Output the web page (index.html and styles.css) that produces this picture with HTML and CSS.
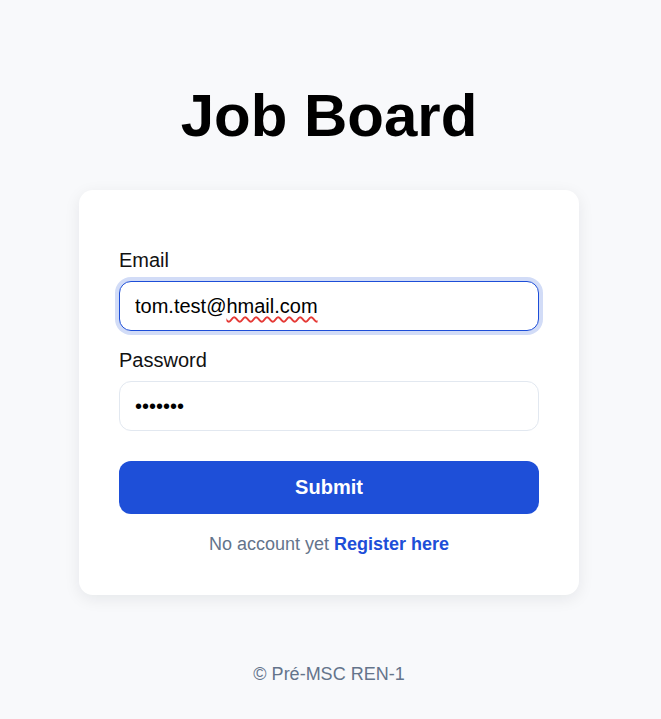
FILE: index.html
```html
<!DOCTYPE html>
<html lang="en">
<head>
<meta charset="utf-8">
<title>Job Board</title>
<link rel="stylesheet" href="styles.css">
</head>
<body>
<main class="page">
  <h1 class="title">Job Board</h1>
  <form class="card">
    <div class="field">
      <label class="label" for="email">Email</label>
      <div class="input-wrap">
        <input class="input is-focused" id="email" type="email" value="tom.test@hmail.com">
        <span class="spell" aria-hidden="true">tom.test@<span class="squiggle">hmail.com</span></span>
      </div>
    </div>
    <div class="field field-second">
      <label class="label" for="password">Password</label>
      <input class="input" id="password" type="password" value="1234567">
    </div>
    <button class="submit" type="button">Submit</button>
    <p class="hint">No account yet <a class="link" href="#">Register here</a></p>
  </form>
  <footer class="footer">© Pré-MSC REN-1</footer>
</main>
</body>
</html>
```

FILE: styles.css
```css
* { box-sizing: border-box; }

html, body {
  margin: 0;
  padding: 0;
}

body {
  background: #f8f9fb;
  font-family: "Liberation Sans", Arial, sans-serif;
  color: #000;
}

.page {
  display: flex;
  flex-direction: column;
  align-items: center;
  padding-top: 81px;
  padding-right: 3px;
}

.title {
  margin: 0 0 40px;
  font-size: 60px;
  font-weight: 700;
  line-height: 69px;
  color: #000;
}

.card {
  width: 500px;
  background: #fff;
  border-radius: 14px;
  box-shadow: 0 4px 16px rgba(15, 23, 42, 0.08);
  padding: 59px 40px 40px;
  display: flex;
  flex-direction: column;
}

.field {
  display: flex;
  flex-direction: column;
  gap: 9px;
}

.field-second {
  margin-top: 18px;
}

.label {
  font-size: 20px;
  line-height: 23px;
  color: #111;
}

.input-wrap {
  position: relative;
}

.input {
  display: block;
  width: 100%;
  height: 50px;
  padding: 12px 15px;
  font-family: "Liberation Sans", Arial, sans-serif;
  font-size: 20px;
  line-height: 23px;
  color: #000;
  background: #fff;
  border: 1px solid #e2e8f0;
  border-radius: 12px;
  outline: none;
}

.input.is-focused {
  border-color: #1d4ed8;
  box-shadow: 0 0 0 4px rgba(29, 78, 216, 0.2);
}

.spell {
  position: absolute;
  left: 16px;
  top: 13px;
  font-size: 20px;
  line-height: 23px;
  color: transparent;
  pointer-events: none;
  white-space: pre;
}

.squiggle {
  text-decoration: underline wavy #e53935;
  text-decoration-thickness: 1.5px;
  text-underline-offset: 4px;
}

.submit {
  margin-top: 30px;
  height: 53px;
  width: 100%;
  border: 0;
  border-radius: 12px;
  background: #1e4fd8;
  color: #fff;
  font-family: "Liberation Sans", Arial, sans-serif;
  font-size: 20px;
  font-weight: 700;
}

.hint {
  margin: 20px 0 0;
  text-align: center;
  font-size: 18px;
  line-height: 21px;
  color: #64748b;
}

.link {
  color: #1d4ed8;
  font-weight: 700;
  text-decoration: none;
}

.footer {
  margin-top: 69px;
  font-size: 18px;
  line-height: 21px;
  color: #64748b;
}
```
